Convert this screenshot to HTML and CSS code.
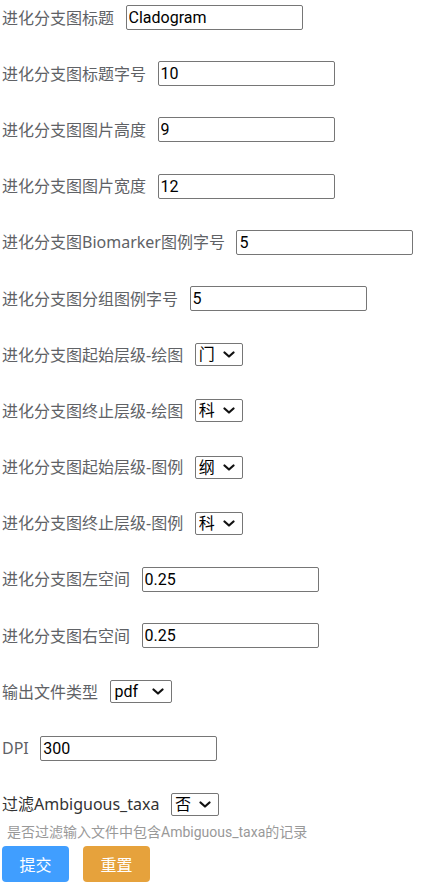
FILE: index.html
```html
<!DOCTYPE html>
<html lang="zh-CN">
<head>
<meta charset="utf-8">
<title>Cladogram</title>
<link rel="stylesheet" href="styles.css">
</head>
<body>
<form class="form">
  <div class="row"><label class="lbl">进化分支图标题</label><input class="txt" type="text" value="Cladogram"></div>
  <div class="row"><label class="lbl">进化分支图标题字号</label><input class="txt" type="text" value="10"></div>
  <div class="row"><label class="lbl">进化分支图图片高度</label><input class="txt" type="text" value="9"></div>
  <div class="row"><label class="lbl">进化分支图图片宽度</label><input class="txt" type="text" value="12"></div>
  <div class="row"><label class="lbl">进化分支图Biomarker图例字号</label><input class="txt" type="text" value="5"></div>
  <div class="row"><label class="lbl">进化分支图分组图例字号</label><input class="txt" type="text" value="5"></div>
  <div class="row"><label class="lbl">进化分支图起始层级-绘图</label><span class="selwrap"><select class="sel"><option>门</option><option>纲</option><option>目</option><option>科</option></select><svg class="chev" viewBox="0 0 12 7" width="12" height="7"><path d="M1.5 1.5 L6 5.5 L10.5 1.5"/></svg></span></div>
  <div class="row"><label class="lbl">进化分支图终止层级-绘图</label><span class="selwrap"><select class="sel"><option>科</option><option>属</option></select><svg class="chev" viewBox="0 0 12 7" width="12" height="7"><path d="M1.5 1.5 L6 5.5 L10.5 1.5"/></svg></span></div>
  <div class="row"><label class="lbl">进化分支图起始层级-图例</label><span class="selwrap"><select class="sel"><option>纲</option><option>门</option></select><svg class="chev" viewBox="0 0 12 7" width="12" height="7"><path d="M1.5 1.5 L6 5.5 L10.5 1.5"/></svg></span></div>
  <div class="row"><label class="lbl">进化分支图终止层级-图例</label><span class="selwrap"><select class="sel"><option>科</option><option>属</option></select><svg class="chev" viewBox="0 0 12 7" width="12" height="7"><path d="M1.5 1.5 L6 5.5 L10.5 1.5"/></svg></span></div>
  <div class="row"><label class="lbl">进化分支图左空间</label><input class="txt" type="text" value="0.25"></div>
  <div class="row"><label class="lbl">进化分支图右空间</label><input class="txt" type="text" value="0.25"></div>
  <div class="row"><label class="lbl">输出文件类型</label><span class="selwrap"><select class="sel sel-wide"><option>pdf</option><option>png</option><option>svg</option></select><svg class="chev" viewBox="0 0 12 7" width="12" height="7"><path d="M1.5 1.5 L6 5.5 L10.5 1.5"/></svg></span></div>
  <div class="row"><label class="lbl">DPI</label><input class="txt" type="text" value="300"></div>
  <div class="row last"><label class="lbl lbl-dark">过滤Ambiguous_taxa</label><span class="selwrap"><select class="sel"><option>否</option><option>是</option></select><svg class="chev" viewBox="0 0 12 7" width="12" height="7"><path d="M1.5 1.5 L6 5.5 L10.5 1.5"/></svg></span></div>
  <p class="hint">是否过滤输入文件中包含Ambiguous_taxa的记录</p>
  <div class="actions">
    <button type="button" class="btn btn-primary">提交</button>
    <button type="button" class="btn btn-warn">重置</button>
  </div>
</form>
</body>
</html>
```

FILE: styles.css
```css
html, body {
  margin: 0;
  padding: 0;
  background: #fff;
}
body {
  font-family: "Noto Sans", "Noto Sans CJK SC", sans-serif;
  font-size: 16px;
  color: #606266;
}
.form {
  display: flex;
  flex-direction: column;
  padding: 5px 0 0 2px;
}
.row {
  display: flex;
  align-items: center;
  height: 25.2px;
  margin-bottom: 31px;
}
.row.last {
  margin-bottom: 6px;
}
.lbl {
  margin-right: 11.5px;
  line-height: 20px;
  white-space: nowrap;
}
.lbl-dark {
  color: #333;
}
.txt {
  box-sizing: border-box;
  width: 177px;
  height: 25px;
  margin: 0;
  padding: 1px 2px;
  border: 1px solid #767676;
  border-radius: 2px;
  font-family: Roboto, "Noto Sans CJK SC", sans-serif;
  font-size: 16px;
  color: #000;
  background: #fff;
}
.selwrap {
  position: relative;
  display: inline-flex;
}
.sel {
  -webkit-appearance: none;
  appearance: none;
  box-sizing: border-box;
  width: 48px;
  height: 23px;
  margin: 0;
  padding: 0 0 0 3px;
  border: 1px solid #767676;
  border-radius: 2px;
  font-family: Roboto, "Noto Sans CJK SC", sans-serif;
  font-size: 16px;
  line-height: 21px;
  color: #000;
  background-color: #fff;
}
.sel-wide {
  width: 62px;
  padding-left: 4px;
}
.chev {
  position: absolute;
  right: 8px;
  top: 8px;
  pointer-events: none;
  fill: none;
  stroke: #111;
  stroke-width: 2.2;
  stroke-linecap: round;
  stroke-linejoin: round;
}
.hint {
  margin: 0 0 4px 5px;
  font-family: Roboto, "Noto Sans CJK SC", sans-serif;
  font-size: 14px;
  line-height: 19px;
  color: #999;
}
.actions {
  display: flex;
  gap: 14px;
}
.btn {
  width: 67px;
  height: 36px;
  border: none;
  border-radius: 4px;
  color: #fff;
  font-family: "Noto Sans CJK SC", sans-serif;
  font-size: 16px;
  padding: 0;
  cursor: pointer;
}
.btn-primary {
  background: #409eff;
}
.btn-warn {
  background: #e6a23c;
}
```
